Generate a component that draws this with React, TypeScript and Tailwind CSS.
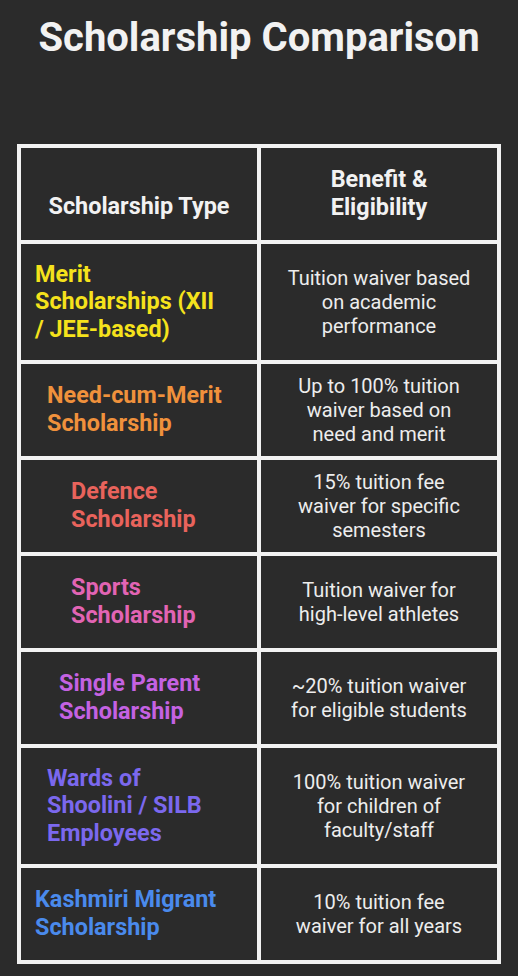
const rows = [
  {
    type: ['Merit', 'Scholarships (XII', '/ JEE-based)'],
    color: 'text-[#f5e21c]',
    indent: 'pl-[14px]',
    benefit: ['Tuition waiver based', 'on academic', 'performance'],
    tall: true,
  },
  {
    type: ['Need-cum-Merit', 'Scholarship'],
    color: 'text-[#f0913c]',
    indent: 'pl-[26px]',
    benefit: ['Up to 100% tuition', 'waiver based on', 'need and merit'],
  },
  {
    type: ['Defence', 'Scholarship'],
    color: 'text-[#e9635c]',
    indent: 'pl-[50px]',
    benefit: ['15% tuition fee', 'waiver for specific', 'semesters'],
  },
  {
    type: ['Sports', 'Scholarship'],
    color: 'text-[#e264b4]',
    indent: 'pl-[50px]',
    benefit: ['Tuition waiver for', 'high-level athletes'],
  },
  {
    type: ['Single Parent', 'Scholarship'],
    color: 'text-[#c462e2]',
    indent: 'pl-[38px]',
    benefit: ['~20% tuition waiver', 'for eligible students'],
  },
  {
    type: ['Wards of', 'Shoolini / SILB', 'Employees'],
    color: 'text-[#7b68ee]',
    indent: 'pl-[26px]',
    benefit: ['100% tuition waiver', 'for children of', 'faculty/staff'],
    tall: true,
  },
  {
    type: ['Kashmiri Migrant', 'Scholarship'],
    color: 'text-[#4a8aec]',
    indent: 'pl-[14px]',
    benefit: ['10% tuition fee', 'waiver for all years'],
  },
]

function Lines({ lines }: { lines: string[] }) {
  return (
    <>
      {lines.map((line, i) => (
        <span key={i} className="block whitespace-nowrap">
          {line}
        </span>
      ))}
    </>
  )
}

export default function App() {
  return (
    <div className="min-h-screen w-[518px] bg-[#2b2b2b] font-['Roboto',sans-serif] text-[#f2f2f2]">
      <h1 className="pt-[14px] text-center text-[40px] font-bold leading-[48px]">
        Scholarship Comparison
      </h1>

      <div className="mx-[17px] mt-[82px] grid grid-cols-2 gap-[4px] bg-[#f2f2f2] p-[4px]">
        {/* Header */}
        <div className="flex h-[92px] items-end justify-center bg-[#2b2b2b] pb-[19px] text-[23.4px] font-bold leading-[27.6px]">
          Scholarship Type
        </div>
        <div className="flex h-[92px] items-center justify-center bg-[#2b2b2b] text-center text-[23.4px] font-bold leading-[27.6px]">
          <div>
            <Lines lines={['Benefit &', 'Eligibility']} />
          </div>
        </div>

        {rows.map((row, i) => (
          <div key={i} className="contents">
            <div
              className={`flex items-center bg-[#2b2b2b] text-[23.4px] font-bold leading-[27.6px] ${row.color} ${row.indent} ${row.tall ? 'h-[116px]' : 'h-[92px]'}`}
            >
              <div>
                <Lines lines={row.type} />
              </div>
            </div>
            <div
              className={`flex items-center justify-center bg-[#2b2b2b] text-center text-[20px] leading-[24px] text-[#ededed] ${row.tall ? 'h-[116px]' : 'h-[92px]'}`}
            >
              <div>
                <Lines lines={row.benefit} />
              </div>
            </div>
          </div>
        ))}
      </div>
    </div>
  )
}
